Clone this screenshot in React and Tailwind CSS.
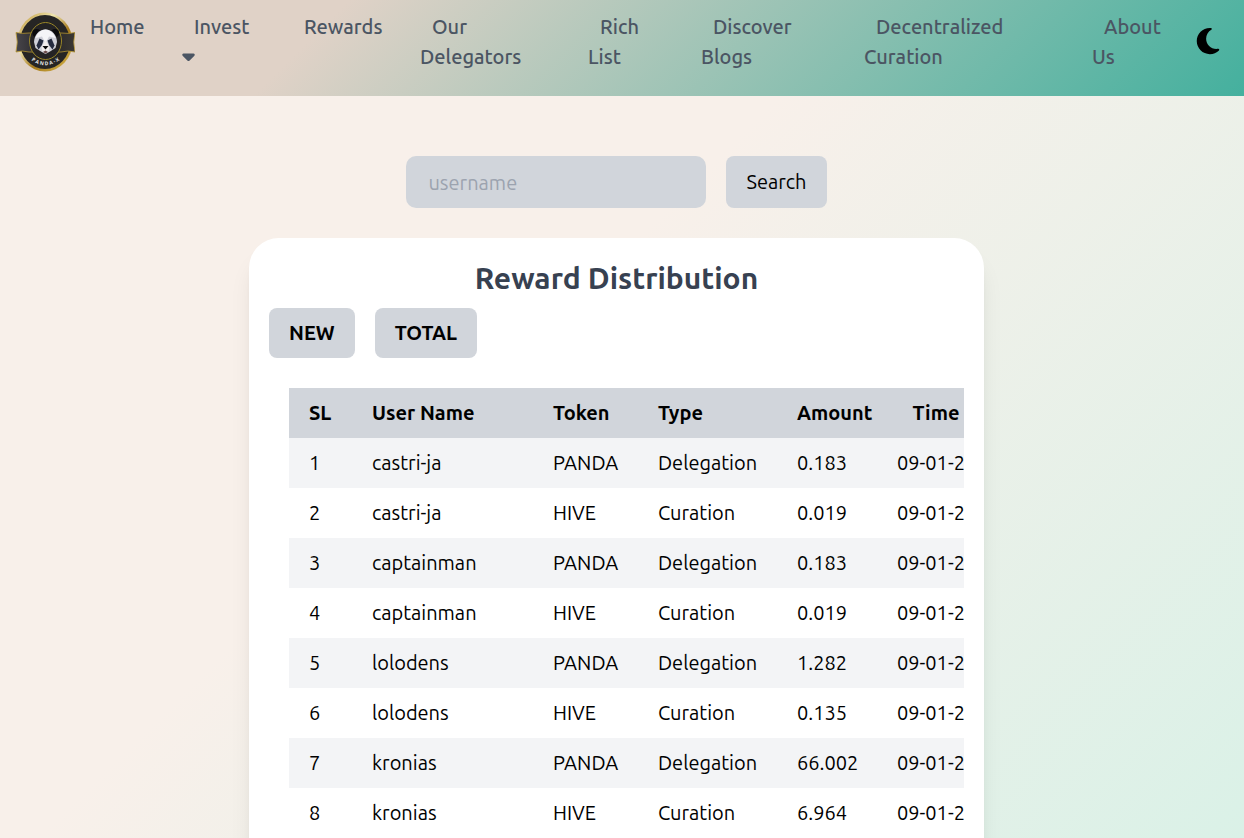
import { useMemo, useState } from 'react';
import { FaCaretDown, FaMoon } from 'react-icons/fa6';

const navLinks = [
  { label: 'Home' },
  { label: 'Invest', dropdown: true },
  { label: 'Rewards' },
  { label: 'Our Delegators' },
  { label: 'Rich List' },
  { label: 'Discover Blogs' },
  { label: 'Decentralized Curation' },
  { label: 'About Us' },
];

const rewards = [
  { user: 'castri-ja', token: 'PANDA', type: 'Delegation', amount: '0.183', time: '09-01-24' },
  { user: 'castri-ja', token: 'HIVE', type: 'Curation', amount: '0.019', time: '09-01-24' },
  { user: 'captainman', token: 'PANDA', type: 'Delegation', amount: '0.183', time: '09-01-24' },
  { user: 'captainman', token: 'HIVE', type: 'Curation', amount: '0.019', time: '09-01-24' },
  { user: 'lolodens', token: 'PANDA', type: 'Delegation', amount: '1.282', time: '09-01-24' },
  { user: 'lolodens', token: 'HIVE', type: 'Curation', amount: '0.135', time: '09-01-24' },
  { user: 'kronias', token: 'PANDA', type: 'Delegation', amount: '66.002', time: '09-01-24' },
  { user: 'kronias', token: 'HIVE', type: 'Curation', amount: '6.964', time: '09-01-24' },
];

const Logo = () => (
  <svg viewBox="0 0 60 60" className="h-[60px] w-[60px]" role="img" aria-label="Panda-X">
    <defs>
      <linearGradient id="gold" x1="0" y1="0" x2="1" y2="1">
        <stop offset="0" stopColor="#b98f2c" />
        <stop offset="0.35" stopColor="#f0e6b0" />
        <stop offset="0.6" stopColor="#a67b1e" />
        <stop offset="1" stopColor="#d9b84c" />
      </linearGradient>
      <linearGradient id="band" x1="0" y1="0" x2="1" y2="0">
        <stop offset="0" stopColor="#47454a" />
        <stop offset="0.5" stopColor="#232225" />
        <stop offset="1" stopColor="#3b3834" />
      </linearGradient>
    </defs>
    <ellipse cx="30" cy="30" rx="27.5" ry="29.5" fill="url(#gold)" />
    <ellipse cx="30" cy="30" rx="25" ry="27" fill="#262524" />
    <path d="M1 20.500 Q8 22 14 21 L46 21 Q53 22 60 20.500 Q57.500 30 60 40 Q53 38 46 40 L14 40 Q7 38 1 40 Q3.500 30 1 20.500Z" fill="url(#band)" stroke="#b3932f" strokeWidth="0.8" />
    <ellipse cx="30.500" cy="29" rx="16" ry="18.500" fill="#242324" stroke="#9a8728" strokeWidth="1" />
    <ellipse cx="21.500" cy="21" rx="4" ry="4" fill="#0b0b0d" />
    <ellipse cx="40" cy="21" rx="4" ry="4" fill="#0b0b0d" />
    <path d="M30.500 17.500 C24 18 19.500 22 19 30 L20.500 36 L26 39.500 L30.500 42 L35 39.500 L40.500 36 L42 30 C41.500 22 37 18 30.500 17.500Z" fill="#cfd0d8" />
    <path d="M30.500 17.500 C26 18 22 21 20.500 26 L27 24.500 L30.500 31 L34 24.500 L40.500 26 C39 21 35 18 30.500 17.500Z" fill="#f4f4f7" />
    <path d="M21.500 33.500 L24.500 26.500 L28.500 28.500 L27 33 L23.500 37.500Z" fill="#252c40" />
    <path d="M39.500 33.500 L36.500 26.500 L32.500 28.500 L34 33 L37.500 37.500Z" fill="#252c40" />
    <path d="M30.500 28 L26.500 35 L27.500 39.500 L33.500 39.500 L34.500 35Z" fill="#f1eded" />
    <path d="M27.500 34 L33.500 34 L30.500 37.500Z" fill="#08080a" />
    <path d="M28 40 L30.500 38.500 L33 40 L30.500 41.500Z" fill="#6a4a48" />
    <path id="logo-arc" d="M14 46.500 Q30 60 47 46.500" fill="none" />
    <text fill="#e8e8e8" fontSize="5" fontWeight="700" fontFamily="Open Sans, sans-serif">
      <textPath href="#logo-arc" startOffset="50%" textAnchor="middle">P A N D A - X</textPath>
    </text>
  </svg>
);

const Navbar = ({ onToggleTheme }) => (
  <header className="flex h-24 bg-[linear-gradient(315deg,#44b09e_0%,#e0d2c7_74%)] pr-[21px] pl-[15px] font-medium text-[#4b5563]">
    <a href="#home" className="mt-3 shrink-0">
      <Logo />
    </a>
    <nav className="ml-[3px] flex-1 pt-3">
      <ul className="grid grid-cols-[104fr_110fr_128fr_168fr_113fr_163fr_228fr_82fr]">
        {navLinks.map((link) => (
          <li key={link.label} className="min-w-0 pr-9">
            <a href={`#${link.label.toLowerCase().replace(' ', '-')}`} className="pl-3">
              {link.label}
              {link.dropdown && <> <FaCaretDown className="inline w-[13px] align-[-2px]" /></>}
            </a>
          </li>
        ))}
      </ul>
    </nav>
    <button type="button" aria-label="Toggle dark mode" className="ml-[19px] flex items-center pb-[14px] text-3xl text-black" onClick={onToggleTheme}>
      <FaMoon />
    </button>
  </header>
);

const App = () => {
  const [username, setUsername] = useState('');
  const [query, setQuery] = useState('');
  const [, setDark] = useState(false);

  const rows = useMemo(() => rewards.filter((row) => row.user.includes(query.toLowerCase())), [query]);

  const handleSearch = (event) => {
    event.preventDefault();
    setQuery(username.trim());
  };

  return (
    <div className="h-screen overflow-x-hidden overflow-y-auto bg-[linear-gradient(135deg,#f8f0ea_42%,#daf1e7_100%)] font-['Ubuntu','Open_Sans',sans-serif] text-xl leading-[30px] text-black [scrollbar-width:none]">
      <Navbar onToggleTheme={() => setDark((value) => !value)} />

      <main className="flex flex-col items-center pt-[60px] pr-[11px] pb-10">
        <form className="flex gap-5" onSubmit={handleSearch}>
          <input
            type="text"
            aria-label="username"
            placeholder="username"
            className="h-[52px] w-[300px] rounded-[10px] bg-[#d1d5db] px-[22px] outline-none placeholder:text-[#9ca3af]"
            value={username}
            onChange={(event) => setUsername(event.target.value)}
          />
          <button type="submit" className="rounded-lg bg-[#d1d5db] px-5">Search</button>
        </form>

        <section className="mt-[30px] w-full max-w-[735px] rounded-[30px] bg-white px-5 pt-5 pb-16 shadow-xl">
          <h1 className="text-center text-3xl leading-10 font-semibold text-[#374151]">Reward Distribution</h1>
          <div className="mt-[10px] flex gap-5 font-semibold">
            <button type="button" className="rounded-lg bg-[#d1d5db] px-5 py-[10px]">NEW</button>
            <button type="button" className="rounded-lg bg-[#d1d5db] px-5 py-[10px]">TOTAL</button>
          </div>

          <div className="mt-[30px] ml-5 overflow-x-auto [scrollbar-width:none]">
            <table className="w-[706px] table-fixed text-left">
              <colgroup>
                <col className="w-[63px]" />
                <col className="w-[181px]" />
                <col className="w-[105px]" />
                <col className="w-[139px]" />
                <col className="w-[100px]" />
                <col className="w-[118px]" />
              </colgroup>
              <thead>
                <tr className="bg-[#d1d5db]">
                  <th className="py-[10px] pl-5 font-semibold">SL</th>
                  <th className="py-[10px] pl-5 font-semibold">User Name</th>
                  <th className="py-[10px] pl-5 font-semibold">Token</th>
                  <th className="py-[10px] pl-5 font-semibold">Type</th>
                  <th className="py-[10px] pl-5 font-semibold">Amount</th>
                  <th className="py-[10px] text-center font-semibold">Time</th>
                </tr>
              </thead>
              <tbody>
                {rows.map((row, index) => (
                  <tr key={`${row.user}-${row.token}`} className="odd:bg-[#f3f4f6]">
                    <td className="py-[10px] pl-5">{index + 1}</td>
                    <td className="py-[10px] pl-5">{row.user}</td>
                    <td className="py-[10px] pl-5">{row.token}</td>
                    <td className="py-[10px] pl-5">{row.type}</td>
                    <td className="py-[10px] pl-5">{row.amount}</td>
                    <td className="py-[10px] pl-5 whitespace-nowrap">{row.time}</td>
                  </tr>
                ))}
              </tbody>
            </table>
          </div>
        </section>
      </main>
    </div>
  );
};

export default App;
